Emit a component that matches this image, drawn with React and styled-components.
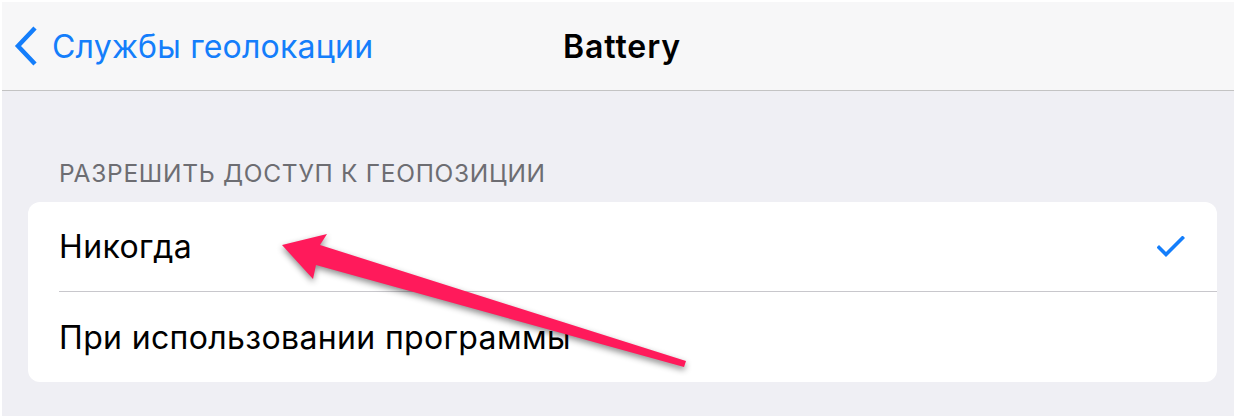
import React from "react";
import styled, { createGlobalStyle } from "styled-components";

const Global = createGlobalStyle`
  html, body { margin: 0; padding: 0; background: #ffffff; }
  body { font-family: Inter, "Noto Sans", "Liberation Sans", sans-serif; -webkit-font-smoothing: antialiased; }
`;

const Outer = styled.div`
  width: 1238px;
  height: 420px;
  box-sizing: border-box;
  padding: 2px 4px 4px 2px;
  background: #ffffff;
`;

const Frame = styled.div`
  position: relative;
  height: 100%;
  background: #efeff4;
  display: flex;
  flex-direction: column;
  overflow: hidden;
`;

const NavBar = styled.div`
  height: 88px;
  flex: none;
  background: #f7f7f8;
  border-bottom: 1px solid #abababb0;
  display: grid;
  grid-template-columns: 1fr auto 1fr;
  align-items: center;
`;

const BackButton = styled.div`
  display: flex;
  align-items: center;
  gap: 13px;
  padding-left: 11px;
  color: #147efb;
  font-size: 32px;
  letter-spacing: 0.2px;
`;

const Title = styled.div`
  font-size: 32px;
  font-weight: 600;
  color: #000;
  letter-spacing: 0.9px;
  padding-left: 8px;
`;

const Content = styled.div`
  flex: 1;
  display: flex;
  flex-direction: column;
  padding: 0 17px 0 26px;
`;

const SectionHeader = styled.div`
  margin-top: 68px;
  padding-left: 31px;
  height: 43px;
  font-size: 24.5px;
  color: #6d6d72;
  letter-spacing: 0.72px;
  line-height: 28px;
`;

const Card = styled.div`
  background: #ffffff;
  border-radius: 12px;
  overflow: hidden;
`;

const Row = styled.div`
  margin-left: 31px;
  padding-right: 32px;
  display: flex;
  align-items: center;
  justify-content: space-between;
  font-size: 32px;
  color: #000;
  letter-spacing: 0.35px;
  border-top: ${(p) => (p.$first ? "none" : "1px solid #c8c7cc")};
  box-sizing: border-box;
  height: ${(p) => (p.$first ? "89px" : "91px")};
`;

const ArrowLayer = styled.svg`
  position: absolute;
  left: -2px;
  top: -2px;
  width: 1238px;
  height: 420px;
  pointer-events: none;
  filter: drop-shadow(0 3px 3px rgba(0, 0, 0, 0.45));
`;

const Chevron = () => (
  <svg width="26" height="42" viewBox="0 0 26 42">
    <path d="M22 3 L5 21 L22 39" fill="none" stroke="#147efb" strokeWidth="4.5" strokeLinecap="butt" strokeLinejoin="miter" />
  </svg>
);

const Check = () => (
  <svg width="28" height="22" viewBox="0 0 28 22">
    <path d="M2 11.5 L9 18.5 L25.5 2" fill="none" stroke="#147efb" strokeWidth="3.6" strokeLinecap="square" />
  </svg>
);

export default function App() {
  return (
    <>
      <Global />
      <Outer>
        <Frame>
          <NavBar>
            <BackButton>
              <Chevron />
              <span>Службы геолокации</span>
            </BackButton>
            <Title>Battery</Title>
            <div />
          </NavBar>
          <Content>
            <SectionHeader>РАЗРЕШИТЬ ДОСТУП К ГЕОПОЗИЦИИ</SectionHeader>
            <Card>
              <Row $first>
                <span>Никогда</span>
                <Check />
              </Row>
              <Row>
                <span>При использовании программы</span>
              </Row>
            </Card>
          </Content>
          <ArrowLayer viewBox="0 0 1238 420">
            <polygon
              points="282,245 327,234 320,245 686,361 684,367 316,265 313,279"
              fill="#ff1a5b"
            />
          </ArrowLayer>
        </Frame>
      </Outer>
    </>
  );
}
